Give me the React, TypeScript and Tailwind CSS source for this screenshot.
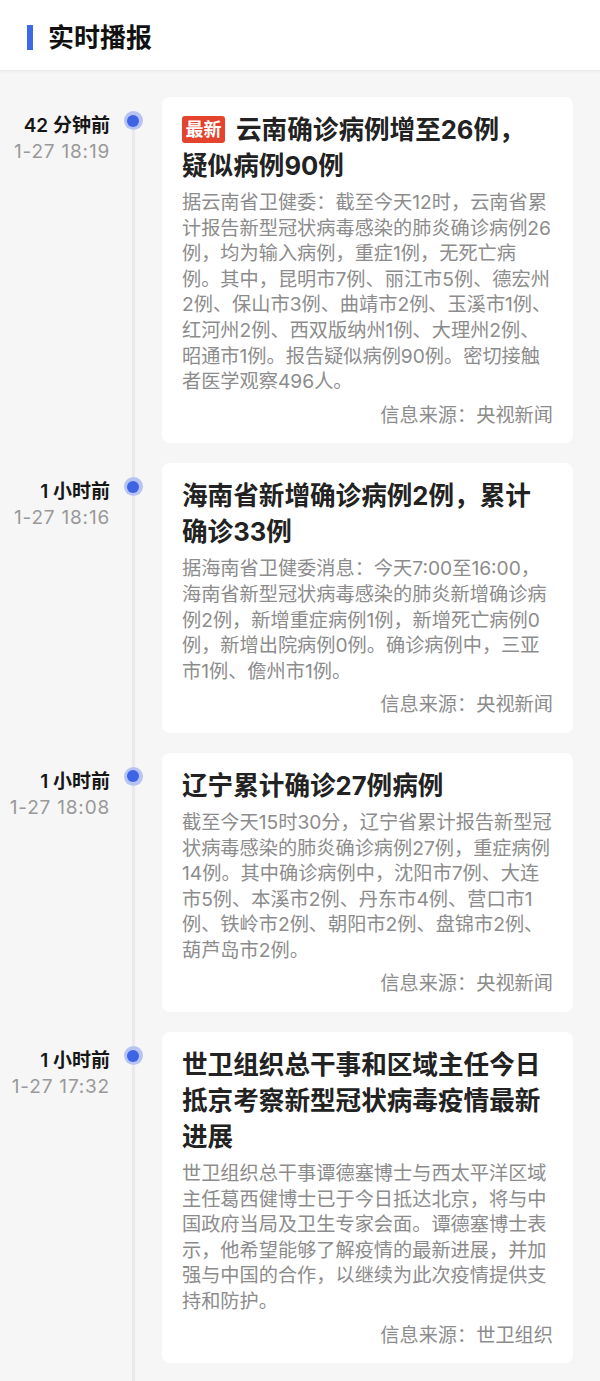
type NewsItem = {
  ago: string;
  time: string;
  badge?: string;
  title: string[];
  body: string[];
  source: string;
};

const items: NewsItem[] = [
  {
    ago: "42 分钟前",
    time: "1-27 18:19",
    badge: "最新",
    title: ["云南确诊病例增至26例，", "疑似病例90例"],
    body: [
      "据云南省卫健委：截至今天12时，云南省累",
      "计报告新型冠状病毒感染的肺炎确诊病例26",
      "例，均为输入病例，重症1例，无死亡病",
      "例。其中，昆明市7例、丽江市5例、德宏州",
      "2例、保山市3例、曲靖市2例、玉溪市1例、",
      "红河州2例、西双版纳州1例、大理州2例、",
      "昭通市1例。报告疑似病例90例。密切接触",
      "者医学观察496人。",
    ],
    source: "信息来源：央视新闻",
  },
  {
    ago: "1 小时前",
    time: "1-27 18:16",
    title: ["海南省新增确诊病例2例，累计", "确诊33例"],
    body: [
      "据海南省卫健委消息：今天7:00至16:00，",
      "海南省新型冠状病毒感染的肺炎新增确诊病",
      "例2例，新增重症病例1例，新增死亡病例0",
      "例，新增出院病例0例。确诊病例中，三亚",
      "市1例、儋州市1例。",
    ],
    source: "信息来源：央视新闻",
  },
  {
    ago: "1 小时前",
    time: "1-27 18:08",
    title: ["辽宁累计确诊27例病例"],
    body: [
      "截至今天15时30分，辽宁省累计报告新型冠",
      "状病毒感染的肺炎确诊病例27例，重症病例",
      "14例。其中确诊病例中，沈阳市7例、大连",
      "市5例、本溪市2例、丹东市4例、营口市1",
      "例、铁岭市2例、朝阳市2例、盘锦市2例、",
      "葫芦岛市2例。",
    ],
    source: "信息来源：央视新闻",
  },
  {
    ago: "1 小时前",
    time: "1-27 17:32",
    title: ["世卫组织总干事和区域主任今日", "抵京考察新型冠状病毒疫情最新", "进展"],
    body: [
      "世卫组织总干事谭德塞博士与西太平洋区域",
      "主任葛西健博士已于今日抵达北京，将与中",
      "国政府当局及卫生专家会面。谭德塞博士表",
      "示，他希望能够了解疫情的最新进展，并加",
      "强与中国的合作，以继续为此次疫情提供支",
      "持和防护。",
    ],
    source: "信息来源：世卫组织",
  },
];

function TimelineRow({ item, first }: { item: NewsItem; first: boolean }) {
  return (
    <div className="flex">
      <div className="w-[110px] shrink-0 pt-[16px] text-right text-[19px] leading-[25.6px]">
        <div className="font-semibold text-[#161616]">{item.ago}</div>
        <div className="tracking-[0.8px] text-[#999999]">{item.time}</div>
      </div>

      <div className="flex w-[46px] shrink-0 flex-col items-center">
        <div className={`h-[14px] w-[3px] ${first ? "" : "bg-[#e9e9eb]"}`} />
        <div className="flex h-[19px] w-[19px] items-center justify-center rounded-full bg-[#b7c4f3]">
          <div className="h-[12px] w-[12px] rounded-full bg-[#3c64e4]" />
        </div>
        <div className="w-[3px] flex-1 bg-[#e9e9eb]" />
      </div>

      <div className="ml-[6px] w-[411px] shrink-0 pb-[20px]">
        <div className="rounded-[8px] bg-white px-[20px] pt-[15px] pb-[15px]">
          <div className="text-[25.6px] font-bold leading-[36px] text-[#222222]">
            {item.title.map((line, i) => (
              <div key={i} className="whitespace-nowrap">
                {i === 0 && item.badge && (
                  <span className="mr-[11px] mt-[4px] inline-block rounded-[3px] bg-[#e4432d] px-[3.5px] align-top text-[18px] font-bold leading-[27px] text-white">
                    {item.badge}
                  </span>
                )}
                {line}
              </div>
            ))}
          </div>
          <div className="mt-[6px] text-[19.2px] leading-[25.6px] text-[#8c8c8c]">
            {item.body.map((line, i) => (
              <div key={i} className="whitespace-nowrap">
                {line}
              </div>
            ))}
          </div>
          <div className="mt-[8px] text-right text-[19.2px] leading-[25.6px] text-[#8c8c8c]">
            {item.source}
          </div>
        </div>
      </div>
    </div>
  );
}

export default function App() {
  return (
    <div className="min-h-screen bg-[#f6f6f7] font-[Inter,'Noto_Sans_CJK_SC',sans-serif]">
      <header className="flex h-[71px] items-center border-b border-[#ebebeb] bg-white px-[27px] pt-[5px] shadow-[0_1px_2px_rgba(0,0,0,0.04)]">
        <div className="h-[25px] w-[6px] bg-[#3b6ae6]" />
        <h1 className="ml-[15px] text-[26px] font-bold leading-none text-[#111111]">实时播报</h1>
      </header>

      <main className="pt-[26px]">
        {items.map((item, i) => (
          <TimelineRow key={i} item={item} first={i === 0} />
        ))}
      </main>
    </div>
  );
}
